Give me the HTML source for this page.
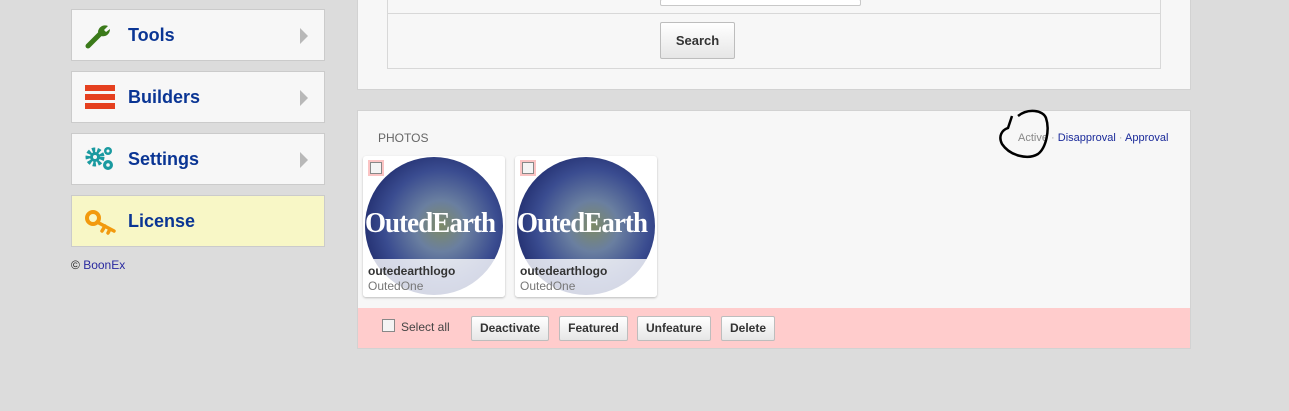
<!DOCTYPE html>
<html><head><style>
body{margin:0;width:1289px;height:411px;background:#dcdcdc;font-family:"Liberation Sans",sans-serif;position:relative;overflow:hidden}
.a{position:absolute}
.menu{position:absolute;left:71px;width:252px;height:50px;background:#f7f7f7;border:1px solid #cbcbcb}
.menu .t{position:absolute;left:56px;top:15px;font-size:18px;font-weight:bold;color:#0a3594}
.menu .ar{position:absolute;right:16px;top:18px;width:0;height:0;border-left:8px solid #b8b8b8;border-top:8px solid transparent;border-bottom:8px solid transparent}
.btn{position:absolute;background:linear-gradient(#fff,#e6e6e6);border:1px solid #bdbdbd;border-radius:2px;font-size:12px;font-weight:bold;color:#333;text-align:center;box-sizing:border-box}
.card{position:absolute;top:156px;width:142px;height:141px;background:#fff;border-radius:3px;box-shadow:0 1px 2px #bbb;overflow:hidden}
.earth{position:absolute;left:2px;top:1px;width:138px;height:138px;border-radius:50%;background:radial-gradient(circle at 55% 50%,#7d8a66 0%,#6a7fa0 25%,#3a4c90 55%,#202c6c 80%,#9aa6c4 100%)}
.earth span{position:absolute;left:0;top:50px;width:138px;display:block;font-family:"Liberation Serif",serif;font-weight:bold;font-size:29px;color:#fff;letter-spacing:-1px;transform:scaleX(0.93);transform-origin:left}
.cap{position:absolute;left:0;top:103px;width:142px;height:38px;background:rgba(255,255,255,0.8)}
.cb{position:absolute;left:5px;top:4px;width:16px;height:16px;background:#fbc4c4}
.cb i{position:absolute;left:2px;top:2px;width:10px;height:10px;border:1px solid #888;background:#f4f4f4}
</style></head><body>
<div class="menu" style="top:9px"><svg class="a" style="left:12px;top:12px" width="28" height="28" viewBox="0 0 28 28"><path d="M4 24 L16 12" stroke="#3b7a1a" stroke-width="5" stroke-linecap="round"/><path d="M14 10 A7 7 0 0 1 24 4 L20 8 L22 10 L26 7 A7 7 0 0 1 17 14 Z" fill="#3b7a1a"/></svg><div class="t">Tools</div><div class="ar"></div></div>
<div class="menu" style="top:71px"><div class="a" style="left:13px;top:13px;width:30px;height:6px;background:#e5401f"></div><div class="a" style="left:13px;top:22px;width:30px;height:6px;background:#e5401f"></div><div class="a" style="left:13px;top:31px;width:30px;height:6px;background:#e5401f"></div><div class="t">Builders</div><div class="ar"></div></div>
<div class="menu" style="top:133px"><svg class="a" style="left:13px;top:11px" width="32" height="28" viewBox="0 0 32 28"><circle cx="10" cy="12" r="7" fill="none" stroke="#1a9aa0" stroke-width="5" stroke-dasharray="3 2"/><circle cx="10" cy="12" r="5" fill="#1a9aa0"/><circle cx="10" cy="12" r="2" fill="#f7f7f7"/><circle cx="23" cy="6" r="4" fill="#1a9aa0"/><circle cx="23" cy="6" r="1.5" fill="#f7f7f7"/><circle cx="23" cy="20" r="5" fill="#1a9aa0"/><circle cx="23" cy="20" r="1.8" fill="#f7f7f7"/></svg><div class="t">Settings</div><div class="ar"></div></div>
<div class="menu" style="top:195px;background:#f8f7c6"><svg class="a" style="left:13px;top:13px" width="32" height="26" viewBox="0 0 32 26"><circle cx="8" cy="9" r="6" fill="none" stroke="#f29a0e" stroke-width="4"/><path d="M12 13 L29 22 M20 17 L17 22 M25 20 L23 24" stroke="#f29a0e" stroke-width="3.5" stroke-linecap="round"/></svg><div class="t">License</div></div>
<div class="a" style="left:71px;top:258px;font-size:12px;color:#222">© <span style="color:#2a2aa0">BoonEx</span></div>

<div class="a" style="left:357px;top:-1px;width:832px;height:89px;background:#f7f7f7;border:1px solid #d2d2d2"></div>
<div class="a" style="left:387px;top:-1px;width:772px;height:68px;border:1px solid #d8d8d8"></div>
<div class="a" style="left:388px;top:13px;width:772px;height:1px;background:#d8d8d8"></div>
<div class="a" style="left:660px;top:-1px;width:199px;height:5px;background:#fff;border:1px solid #c8c8c8;border-radius:2px"></div>
<div class="btn" style="left:660px;top:22px;width:75px;height:37px;line-height:35px;font-size:13px">Search</div>

<div class="a" style="left:357px;top:110px;width:832px;height:237px;background:#f7f7f7;border:1px solid #d2d2d2"></div>
<div class="a" style="left:378px;top:131px;font-size:12px;color:#666">PHOTOS</div>
<div class="a" style="left:1018px;top:132px;font-size:11px;color:#888">Active <span style="color:#aaa">·</span> <span style="color:#1a2a9a">Disapproval</span> <span style="color:#aaa">·</span> <span style="color:#1a2a9a">Approval</span></div>
<svg class="a" style="left:998px;top:108px" width="55" height="52"><path d="M20 8 C30 0 45 2 48 10 C52 22 48 40 40 46 C30 52 12 48 4 36 C0 28 4 22 10 20 L14 8" fill="none" stroke="#000" stroke-width="2.5"/></svg>
<div class="card" style="left:363px"><div class="earth"><span>OutedEarth</span></div><div class="cap"></div><div class="a" style="left:5px;top:108px;font-size:12px;font-weight:bold;color:#333">outedearthlogo</div><div class="a" style="left:5px;top:123px;font-size:12px;color:#777">OutedOne</div><div class="cb"><i></i></div></div>
<div class="card" style="left:515px"><div class="earth"><span>OutedEarth</span></div><div class="cap"></div><div class="a" style="left:5px;top:108px;font-size:12px;font-weight:bold;color:#333">outedearthlogo</div><div class="a" style="left:5px;top:123px;font-size:12px;color:#777">OutedOne</div><div class="cb"><i></i></div></div>
<div class="a" style="left:358px;top:308px;width:832px;height:40px;background:#ffcccc"></div>
<div class="a" style="left:382px;top:319px;width:11px;height:11px;border:1px solid #888;background:#f4f4f4"></div>
<div class="a" style="left:401px;top:320px;font-size:12px;color:#444">Select all</div>
<div class="btn" style="left:471px;top:316px;width:78px;height:25px;line-height:23px">Deactivate</div>
<div class="btn" style="left:559px;top:316px;width:69px;height:25px;line-height:23px">Featured</div>
<div class="btn" style="left:637px;top:316px;width:74px;height:25px;line-height:23px">Unfeature</div>
<div class="btn" style="left:721px;top:316px;width:54px;height:25px;line-height:23px">Delete</div>
</body></html>
